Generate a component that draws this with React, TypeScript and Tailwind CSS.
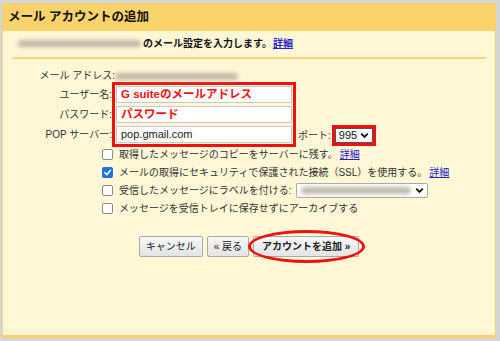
import React from "react";

const font = { fontFamily: '"Liberation Sans", "Noto Sans CJK JP", sans-serif' };

function Blur({ w }: { w: number }) {
  return (
    <span className="inline-block relative h-[10px] align-middle" style={{ width: w }}>
      <span className="absolute inset-x-0 top-[2px] h-[7px] bg-[#bdb8ab] blur-[2px] rounded-full" />
    </span>
  );
}

function Box({ checked }: { checked?: boolean }) {
  return checked ? (
    <span className="w-[11px] h-[11px] rounded-[2px] bg-[#1a73e8] flex items-center justify-center shrink-0">
      <svg width="9" height="9" viewBox="0 0 10 10">
        <path d="M2 5.2 L4.2 7.4 L8.2 2.6" stroke="white" strokeWidth="1.8" fill="none" strokeLinecap="round" strokeLinejoin="round" />
      </svg>
    </span>
  ) : (
    <span className="w-[11px] h-[11px] rounded-[2px] bg-white border border-[#8a8a8a] shrink-0" />
  );
}

function Chevron() {
  return (
    <svg width="9" height="7" viewBox="0 0 9 7">
      <path d="M1.2 1.6 L4.5 4.9 L7.8 1.6" stroke="#111" strokeWidth="1.8" fill="none" />
    </svg>
  );
}

function Link() {
  return <span className="text-[#2323c8] underline ml-[2px]">詳細</span>;
}

function Input({ children }: { children?: React.ReactNode }) {
  return (
    <div className="h-[17px] w-[176px] bg-white border border-[#c9c9c9] flex items-center px-[4px] text-[11px] leading-none">
      {children}
    </div>
  );
}

function Btn({ children, bold }: { children: React.ReactNode; bold?: boolean }) {
  return (
    <div
      className={
        "h-[21px] px-[6px] flex items-center rounded-[2px] border border-[#a9a9a9] bg-gradient-to-b from-[#f7f7f7] to-[#e4e4e4] text-[10px] text-[#222] " +
        (bold ? "font-bold px-[8px] text-[10.5px]" : "")
      }
    >
      {children}
    </div>
  );
}

export default function App() {
  return (
    <div className="w-[500px] h-[341px] bg-[#d6d6d6] pt-[3px] pl-[2px] pr-[4px] pb-[3px]" style={font}>
      <div className="h-full bg-[#fff7d5] border border-[#efcf78] border-b-[3px] border-b-[#f6d36f] flex flex-col">
        <div className="h-[27px] bg-[#fbd36b] flex items-center pl-[5px] text-[12.5px] font-bold text-[#111]">
          メール アカウントの追加
        </div>
        <div className="flex items-center h-[14px] mt-[5px] pl-[15px] text-[10px] text-[#111]">
          <Blur w={123} />
          <span className="font-bold ml-[2px]">のメール設定を入力します。</span>
          <span className="text-[#2323c8] underline font-bold ml-[1px]">詳細</span>
        </div>
        <div className="mx-[9px] mt-[7px] h-[2px] bg-[#f8d77c]" />
        <div className="mt-[10px] flex items-center h-[13px] text-[10px] text-[#333]">
          <span className="w-[112px] text-right">メール アドレス:</span>
          <Blur w={123} />
        </div>
        <div className="flex mt-0 text-[10px] text-[#333]">
          <div className="w-[109px] flex flex-col pt-[4px] gap-[3px] text-right">
            <span className="h-[17px] leading-[17px]">ユーザー名:</span>
            <span className="h-[17px] leading-[17px]">パスワード:</span>
            <span className="h-[17px] leading-[17px]">POP サーバー:</span>
          </div>
          <div className="border-[3px] border-[#ee1111] p-[1px] flex flex-col gap-[3px]">
            <Input>
              <span className="text-[#ee1111] font-bold text-[11.5px]">G suiteのメールアドレス</span>
            </Input>
            <Input>
              <span className="text-[#ee1111] font-bold text-[11.5px]">パスワード</span>
            </Input>
            <Input>
              <span className="text-[#222]">pop.gmail.com</span>
            </Input>
          </div>
          <div className="self-end flex items-center mb-[1px] ml-[2px]">
            <span>ポート:</span>
            <div className="border-[3px] border-[#ee1111] ml-[1px]">
              <div className="h-[15px] w-[38px] bg-white border border-[#555] flex items-center justify-between pl-[3px] pr-[3px] text-[11px] text-[#111]">
                <span>995</span>
                <Chevron />
              </div>
            </div>
          </div>
        </div>
        <div className="flex flex-col pl-[99px] -mt-[2px] text-[10px] text-[#333]">
          <div className="flex items-center h-[18px] gap-[6px]">
            <Box />
            <span>
              取得したメッセージのコピーをサーバーに残す。<Link />
            </span>
          </div>
          <div className="flex items-center h-[18px] gap-[6px]">
            <Box checked />
            <span>
              メールの取得にセキュリティで保護された接続（SSL）を使用する。<Link />
            </span>
          </div>
          <div className="flex items-center h-[18px] gap-[6px]">
            <Box />
            <span>受信したメッセージにラベルを付ける:</span>
            <div className="h-[15px] w-[132px] bg-white border border-[#aaa] rounded-[2px] flex items-center justify-between pl-[4px] pr-[3px] -ml-[2px]">
              <Blur w={110} />
              <Chevron />
            </div>
          </div>
          <div className="flex items-center h-[18px] gap-[6px]">
            <Box />
            <span>メッセージを受信トレイに保存せずにアーカイブする</span>
          </div>
        </div>
        <div className="flex justify-center gap-[4px] mt-[19px]">
          <Btn>キャンセル</Btn>
          <Btn>« 戻る</Btn>
          <div className="relative">
            <Btn bold>アカウントを追加 »</Btn>
            <div className="absolute -left-[5px] -right-[6px] -top-[6px] -bottom-[6px] rounded-[50%] border-[3px] border-[#ee1111]" />
          </div>
        </div>
      </div>
    </div>
  );
}
